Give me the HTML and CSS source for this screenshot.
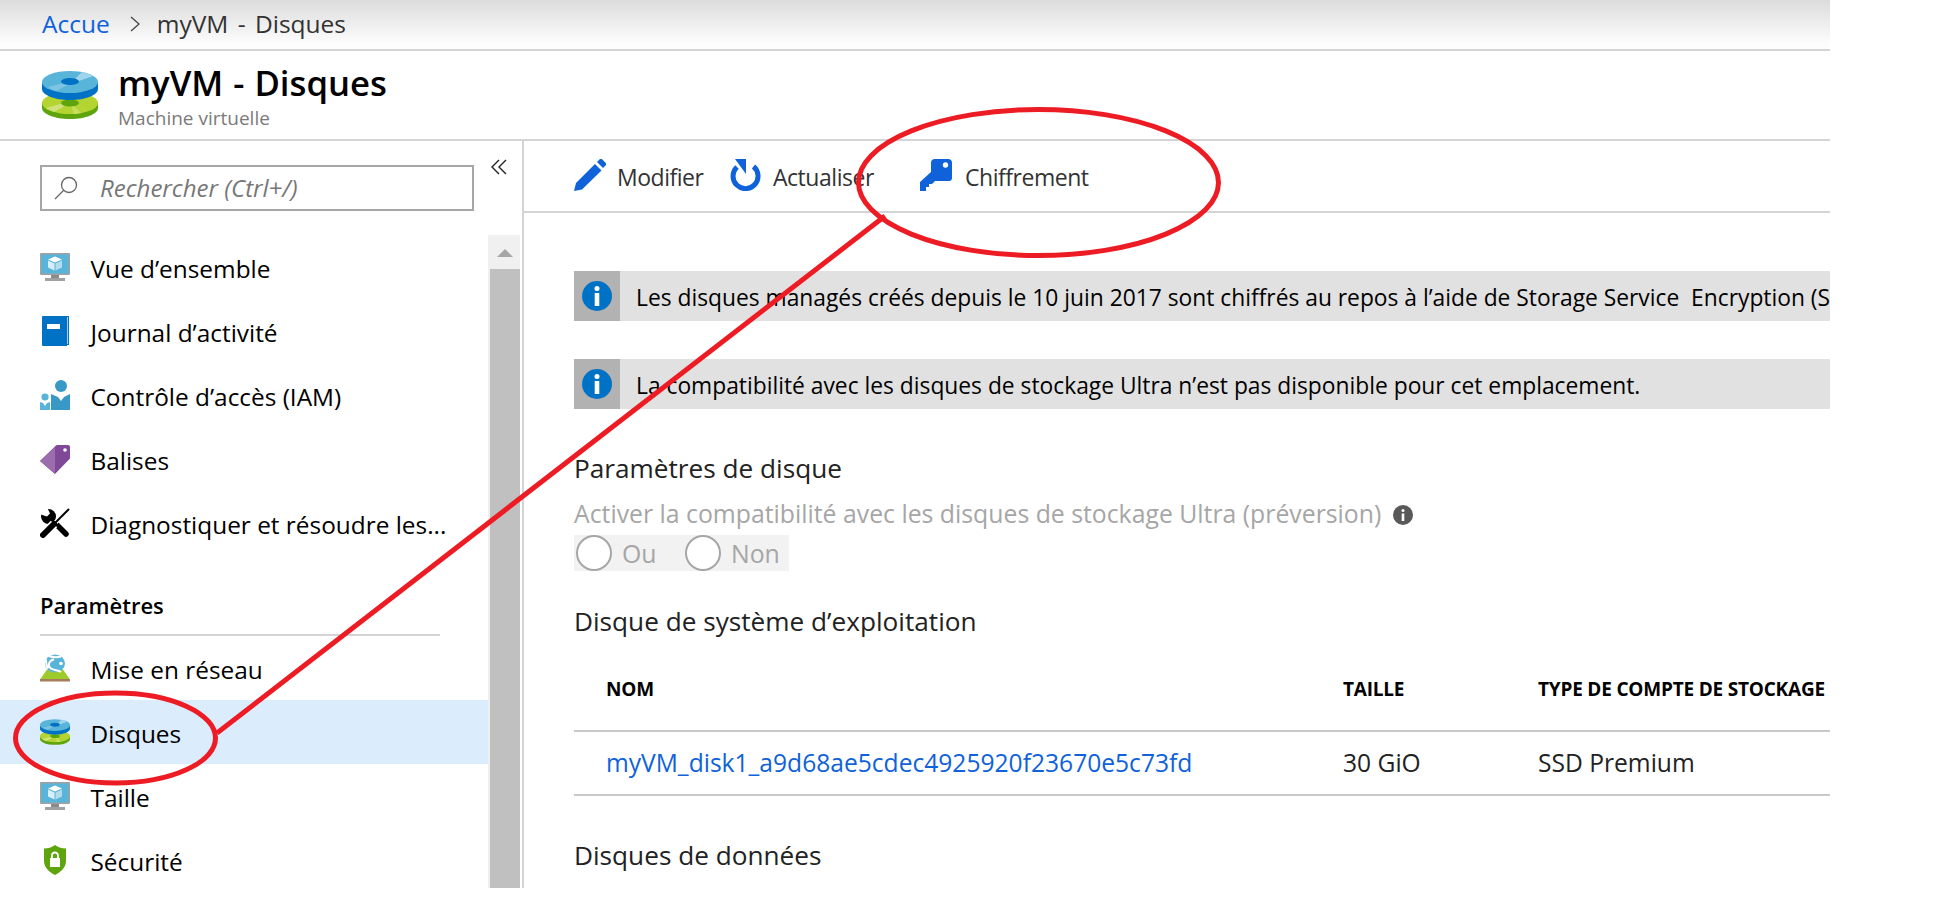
FILE: index.html
```html
<!DOCTYPE html>
<html lang="fr">
<head>
<meta charset="utf-8">
<title>myVM - Disques</title>
<link rel="stylesheet" href="styles.css">
</head>
<body>
<svg class="defs" width="0" height="0" aria-hidden="true">
  <symbol id="i-disk" viewBox="0 0 56 48">
    <path d="M0 31v6c0 6 12.500 11 28 11s28-5 28-11v-6z" fill="#5ea40d"/>
    <ellipse cx="28" cy="32" rx="28" ry="11" fill="#b4d432"/>
    <path d="M28 32 12 41c-3-1-6-3-8-4l21-6z" fill="#cfe27a"/>
    <path d="M30 33l9 9c-2 .5-5 1-7 1l-3-9z" fill="#c6de5c"/>
    <ellipse cx="28" cy="32" rx="9" ry="3.400" fill="#5ea40d"/>
    <path d="M0 12v6c0 6 12.500 11 28 11s28-5 28-11v-6z" fill="#0072c6"/>
    <ellipse cx="28" cy="11" rx="28" ry="11" fill="#59b4d9"/>
    <path d="M32 9 40 1c4 1 9 3 11 4L34 11z" fill="#9fd4ec"/>
    <path d="M28 13 14 20c-3-1-6-2-8-4l19-5z" fill="#7cc4e2"/>
    <ellipse cx="28" cy="10.500" rx="9" ry="3.600" fill="#0072c6"/>
  </symbol>
  <symbol id="i-vm" viewBox="0 0 30 28">
    <rect x="0" y="0" width="30" height="22" rx="1" fill="#a0a1a2"/>
    <rect x="1.500" y="1.500" width="27" height="19" fill="#59b4d9"/>
    <path d="M11 22h8v3h-8z" fill="#8a8a8a"/>
    <path d="M5 25h20v3H5z" fill="#a0a1a2"/>
    <path d="M15 3.500l7 3-7 3-7-3z" fill="#fff"/>
    <path d="M8 7.500l6.500 3v7l-6.500-3z" fill="#d8eef8"/>
    <path d="M22 7.500l-6.500 3v7l6.500-3z" fill="#b3dcef"/>
  </symbol>
  <symbol id="i-book" viewBox="0 0 28 30">
    <path d="M2 0h26v29H2z" fill="#0072c6"/>
    <path d="M1 1a1 1 0 0 1 1-1h24v30H2a1 1 0 0 1-1-1z" fill="#0072c6"/>
    <path d="M26 1h.8v27H26z" fill="#cfe6f5"/>
    <rect x="6" y="8" width="13" height="5" fill="#fff"/>
  </symbol>
  <symbol id="i-iam" viewBox="0 0 30 30">
    <circle cx="21" cy="6" r="6" fill="#3999c6"/>
    <path d="M11 14l7 3 3 4 3-4 6-3v16H11z" fill="#3999c6"/>
    <circle cx="5" cy="17" r="3.600" fill="#59b4d9"/>
    <path d="M0 22l3 1 2 3 2-3 3-1v8H0z" fill="#59b4d9"/>
  </symbol>
  <symbol id="i-tag" viewBox="0 0 30 30">
    <path d="M15 30 0 17 16 1.500a2 2 0 0 1 1.500-.5H28a2 2 0 0 1 2 2v11.500z" fill="#804998"/>
    <path d="M15 30 0 17 15 3z" fill="#9b6dad"/>
    <circle cx="25" cy="6" r="1.800" fill="#fff"/>
  </symbol>
  <symbol id="i-tools" viewBox="0 0 30 30">
    <circle cx="8.500" cy="8.500" r="7.500" fill="#000"/>
    <path d="M9 9 26 26" stroke="#000" stroke-width="5.500" stroke-linecap="round"/>
    <path d="M1-1h6l3 6.500-3 3L-1 6z" fill="#fff"/>
    <path d="M29 1 15 15" stroke="#fff" stroke-width="4.500"/>
    <path d="M29 1 15 15" stroke="#000" stroke-width="2"/>
    <path d="M14 16 6 24" stroke="#fff" stroke-width="9"/>
    <path d="M14 16 3 27" stroke="#000" stroke-width="6" stroke-linecap="round"/>
  </symbol>
  <symbol id="i-net" viewBox="0 0 30 27">
    <path d="M7 15h16l7 10H0z" fill="#9ccb2b"/>
    <rect x="0" y="24.500" width="30" height="2.500" fill="#a67c5d"/>
    <ellipse cx="15" cy="9" rx="10" ry="9" fill="#59b4d9"/>
    <path d="M9 1.500c4 1.500 8 1.500 12 .5M14 5c-5 1-7 6-3 9 3 2 7 1.500 10 3.500M6 5c0 3 0 6 2 9" fill="none" stroke="#fff" stroke-width="2"/>
    <circle cx="21" cy="9" r="1.800" fill="#fff"/>
  </symbol>
  <symbol id="i-shield" viewBox="0 0 22 30">
    <path d="M11 0c3 2.500 7 3.500 11 3.500V16c0 7-6 11.500-11 14C6 27.500 0 23 0 16V3.500C4 3.500 8 2.500 11 0z" fill="#5ea40d"/>
    <path d="M6 13h10v9H6z" fill="#fff"/>
    <path d="M8 13V10.500a3 3 0 0 1 6 0V13" fill="none" stroke="#fff" stroke-width="1.800"/>
  </symbol>
  <symbol id="i-pencil" viewBox="0 0 32 32">
    <path d="M21 5l6.500 6.500L8 30.500 0 32l2-8z" fill="#0f62d9"/>
    <path d="M23 3l2.500-2.500a2 2 0 0 1 2.800 0l3.200 3.200a2 2 0 0 1 0 2.800L29 9z" fill="#0f62d9"/>
  </symbol>
  <symbol id="i-refresh" viewBox="0 0 32 32">
    <path d="M23.500 7.500A12.500 12.500 0 1 1 7 8" fill="none" stroke="#0f62d9" stroke-width="5"/>
    <path d="M5 0h11v15z" fill="#0f62d9"/>
  </symbol>
  <symbol id="i-key" viewBox="0 0 32 32">
    <path d="M15 0h13a4 4 0 0 1 4 4v15a3 3 0 0 1-3 3H15l-3 3H9v3H6v4H0v-9l11-10V4a4 4 0 0 1 4-4z" fill="#0f62d9"/>
    <circle cx="25.500" cy="6" r="2.700" fill="#fff"/>
  </symbol>
  <symbol id="i-info" viewBox="0 0 30 30">
    <circle cx="15" cy="15" r="15" fill="#0072c6"/>
    <circle cx="15" cy="7.500" r="2.500" fill="#fff"/>
    <rect x="12.700" y="12" width="4.600" height="13" fill="#fff"/>
  </symbol>
</svg>

<div class="page">
  <nav class="crumbs">
    <a class="crumb-link">Accue</a>
    <svg class="crumb-sep" viewBox="0 0 10 16"><path d="M1 1l8 7-8 7" fill="none" stroke="#444" stroke-width="1.300"/></svg>
    <span class="crumb-here">myVM - Disques</span>
  </nav>

  <header class="head">
    <svg class="head-icon"><use href="#i-disk"/></svg>
    <div class="head-text">
      <h1 class="head-title">myVM - Disques</h1>
      <p class="head-sub">Machine virtuelle</p>
    </div>
  </header>

  <div class="body">
    <aside class="side">
      <div class="search-row">
        <div class="search">
          <svg class="search-icon" viewBox="0 0 24 24"><circle cx="15" cy="9" r="7.500" fill="none" stroke="#666" stroke-width="1.300"/><path d="M9.500 14.500 1 23" stroke="#666" stroke-width="1.300"/></svg>
          <span class="search-text">Rechercher (Ctrl+/)</span>
        </div>
        <svg class="collapse" viewBox="0 0 16 16"><path d="M8 1 1 8l7 7M15 1 8 8l7 7" fill="none" stroke="#222" stroke-width="1.400"/></svg>
      </div>
      <div class="menu-area">
        <ul class="menu">
          <li class="item"><svg class="item-icon"><use href="#i-vm"/></svg><span class="item-text">Vue d’ensemble</span></li>
          <li class="item"><svg class="item-icon"><use href="#i-book"/></svg><span class="item-text">Journal d’activité</span></li>
          <li class="item"><svg class="item-icon"><use href="#i-iam"/></svg><span class="item-text">Contrôle d’accès (IAM)</span></li>
          <li class="item"><svg class="item-icon"><use href="#i-tag"/></svg><span class="item-text">Balises</span></li>
          <li class="item"><svg class="item-icon"><use href="#i-tools"/></svg><span class="item-text">Diagnostiquer et résoudre les...</span></li>
          <li class="group">Paramètres</li>
          <li class="item"><svg class="item-icon"><use href="#i-net"/></svg><span class="item-text">Mise en réseau</span></li>
          <li class="item item-on"><svg class="item-icon"><use href="#i-disk"/></svg><span class="item-text">Disques</span></li>
          <li class="item"><svg class="item-icon"><use href="#i-vm"/></svg><span class="item-text">Taille</span></li>
          <li class="item"><svg class="item-icon"><use href="#i-shield"/></svg><span class="item-text">Sécurité</span></li>
        </ul>
        <div class="scroll">
          <div class="scroll-up"><span class="scroll-arrow"></span></div>
          <div class="scroll-thumb"></div>
        </div>
      </div>
    </aside>

    <main class="main">
      <div class="toolbar">
        <span class="tool tool-edit"><svg class="tool-icon"><use href="#i-pencil"/></svg>Modifier</span>
        <span class="tool tool-refresh"><svg class="tool-icon"><use href="#i-refresh"/></svg>Actualiser</span>
        <span class="tool tool-key"><svg class="tool-icon"><use href="#i-key"/></svg>Chiffrement</span>
      </div>
      <div class="content">
        <div class="banner">
          <div class="banner-side"><svg class="banner-icon"><use href="#i-info"/></svg></div>
          <div class="banner-text">Les disques managés créés depuis le 10 juin 2017 sont chiffrés au repos à l’aide de Storage Service &nbsp;Encryption (SSE).</div>
        </div>
        <div class="banner banner-next">
          <div class="banner-side"><svg class="banner-icon"><use href="#i-info"/></svg></div>
          <div class="banner-text">La compatibilité avec les disques de stockage Ultra n’est pas disponible pour cet emplacement.</div>
        </div>

        <h2 class="section section-first">Paramètres de disque</h2>
        <div class="label">Activer la compatibilité avec les disques de stockage Ultra (préversion)<svg class="label-info" viewBox="0 0 20 20"><circle cx="10" cy="10" r="10" fill="#595959"/><circle cx="10" cy="5.500" r="1.500" fill="#fff"/><rect x="8.700" y="8.500" width="2.600" height="7.500" fill="#fff"/></svg></div>
        <div class="radios">
          <span class="radio"></span><span class="radio-text radio-text-cut">Oui</span>
          <span class="radio"></span><span class="radio-text">Non</span>
        </div>

        <h2 class="section section-os">Disque de système d’exploitation</h2>
        <div class="row row-head">
          <span>NOM</span><span>TAILLE</span><span>TYPE DE COMPTE DE STOCKAGE</span>
        </div>
        <div class="row row-data">
          <a class="disk-link">myVM_disk1_a9d68ae5cdec4925920f23670e5c73fd</a><span>30 GiO</span><span>SSD Premium</span>
        </div>

        <h2 class="section section-data">Disques de données</h2>
      </div>
    </main>
  </div>

  <svg class="marks" viewBox="0 0 1942 920">
    <ellipse cx="1038.500" cy="182.500" rx="180" ry="73"/>
    <ellipse cx="115.500" cy="738" rx="100" ry="45"/>
    <path d="M217 733 885 216"/>
  </svg>
</div>
</body>
</html>
```
FILE: styles.css
```css
* { box-sizing: border-box; }
html, body { margin: 0; padding: 0; background: #fff; }
body { font-family: "Open Sans", "Noto Sans", sans-serif; color: #000; overflow: hidden; }
.defs { position: absolute; }
.page { position: relative; width: 1830px; height: 888px; overflow: hidden; background: #fff; }

.crumbs { height: 51px; padding: 0 0 2px 42px; display: flex; align-items: center; font-size: 24.5px; border-bottom: 2px solid #d4d4d4; background: linear-gradient(#dcdcdc, #fdfdfd 90%); }
.crumb-link { color: #0f62d9; }
.crumb-sep { width: 10px; height: 16px; margin: 0 17px 0 20px; flex: none; }
.crumb-here { color: #333; word-spacing: 3px; }

.head { height: 90px; display: flex; border-bottom: 2px solid #d4d4d4; }
.head-icon { width: 56px; height: 48px; margin: 20px 20px 0 42px; }
.head-title { margin: 11px 0 0; font-size: 34.7px; line-height: 42px; font-weight: 600; word-spacing: 1px; }
.head-sub { margin: 3px 0 0; font-size: 19px; line-height: 22px; color: #7a7a7a; }

.body { height: 747px; display: flex; }
.side { width: 522px; flex: none; display: flex; flex-direction: column; padding-right: 2px; }
.search-row { height: 94px; padding: 24px 0 0 40px; display: flex; align-items: flex-start; }
.search { width: 434px; height: 46px; border: 2px solid #a6a6a6; display: flex; align-items: center; padding: 0 0 2px 12px; }
.search-icon { width: 24px; height: 24px; margin: 2px 22px 0 0; }
.search-text { font-size: 24px; font-style: italic; color: #777; }
.collapse { width: 16px; height: 16px; margin: -6px 0 0 17px; }

.menu-area { flex: 1; min-height: 0; display: flex; }
.menu { width: 488px; flex: none; margin: 0; padding: 0; list-style: none; font-size: 24.4px; overflow: hidden; }
.item { height: 64px; display: flex; align-items: center; padding-left: 40px; white-space: nowrap; }
.item-on { background: #dbecfd; }
.item-icon { width: 30px; height: 30px; margin-right: 20.5px; flex: none; }
.item-text { margin-top: 3px; }
.group { height: 81px; margin: 0 48px 0 40px; padding-top: 35px; border-bottom: 2px solid #d4d4d4; font-size: 22px; font-weight: 600; line-height: 30px; }

.scroll { width: 32px; flex: none; background: #f0f0f0; padding-left: 2px; display: flex; flex-direction: column; }
.scroll-up { height: 34px; display: flex; justify-content: center; padding-top: 14px; }
.scroll-arrow { width: 0; height: 0; border-left: 8px solid transparent; border-right: 8px solid transparent; border-bottom: 8px solid #a6a6a6; }
.scroll-thumb { flex: 1; background: #c0c0c0; }

.main { flex: 1; min-width: 0; border-left: 2px solid #d4d4d4; overflow: hidden; }
.toolbar { height: 72px; padding: 18px 0 0 50px; display: flex; border-bottom: 2px solid #d4d4d4; font-size: 23px; color: #333; letter-spacing: -.47px; }
.tool { display: flex; align-items: flex-start; line-height: 36px; white-space: nowrap; }
.tool-icon { width: 32px; height: 32px; margin-right: 11px; flex: none; }
.tool-edit { width: 156px; }
.tool-refresh { width: 190px; }
.tool-key .tool-icon { margin-right: 13px; }

.content { padding: 58px 0 0 50px; }
.banner { height: 50px; display: flex; background: #e1e1e1; font-size: 22.8px; white-space: nowrap; }
.banner-next { margin-top: 38px; }
.banner-side { width: 46px; flex: none; background: #b2b2b2; display: flex; align-items: center; justify-content: center; }
.banner-icon { width: 30px; height: 30px; }
.banner-text { margin-left: 16px; line-height: 53px; overflow: hidden; flex: 1; }

.section { margin: 0; font-size: 26.2px; font-weight: 400; line-height: 34px; color: #222; }
.section-first { margin-top: 42px; }
.section-os { margin-top: 33px; }
.section-data { margin-top: 42px; }
.label { margin-top: 11px; font-size: 24.8px; line-height: 34px; color: #a6a6a6; display: flex; align-items: center; white-space: nowrap; }
.label-info { width: 20px; height: 20px; margin: 3px 0 0 12px; }
.radios { width: 215px; height: 36px; margin-top: 5px; background: #f2f2f2; display: flex; align-items: center; padding-left: 2px; font-size: 24.8px; color: #a6a6a6; }
.radio { width: 36px; height: 36px; border: 2px solid #a6a6a6; border-radius: 50%; background: #fff; flex: none; }
.radio-text { margin-left: 10px; }
.radio-text-cut { width: 33px; margin-right: 30px; overflow: hidden; }

.row { display: grid; grid-template-columns: 737px 195px 1fr; padding-left: 32px; border-bottom: 2px solid #c8c8c8; white-space: nowrap; }
.row-head { height: 94px; padding-top: 39px; font-size: 19px; font-weight: 700; line-height: 24px; letter-spacing: -.2px; }
.row-data { height: 64px; align-items: center; font-size: 24.6px; color: #222; padding-bottom: 2px; }
.disk-link { color: #0f62d9; }

.marks { position: absolute; left: 0; top: 0; width: 1942px; height: 920px; fill: none; stroke: #ed1c24; stroke-width: 5; pointer-events: none; }
```
